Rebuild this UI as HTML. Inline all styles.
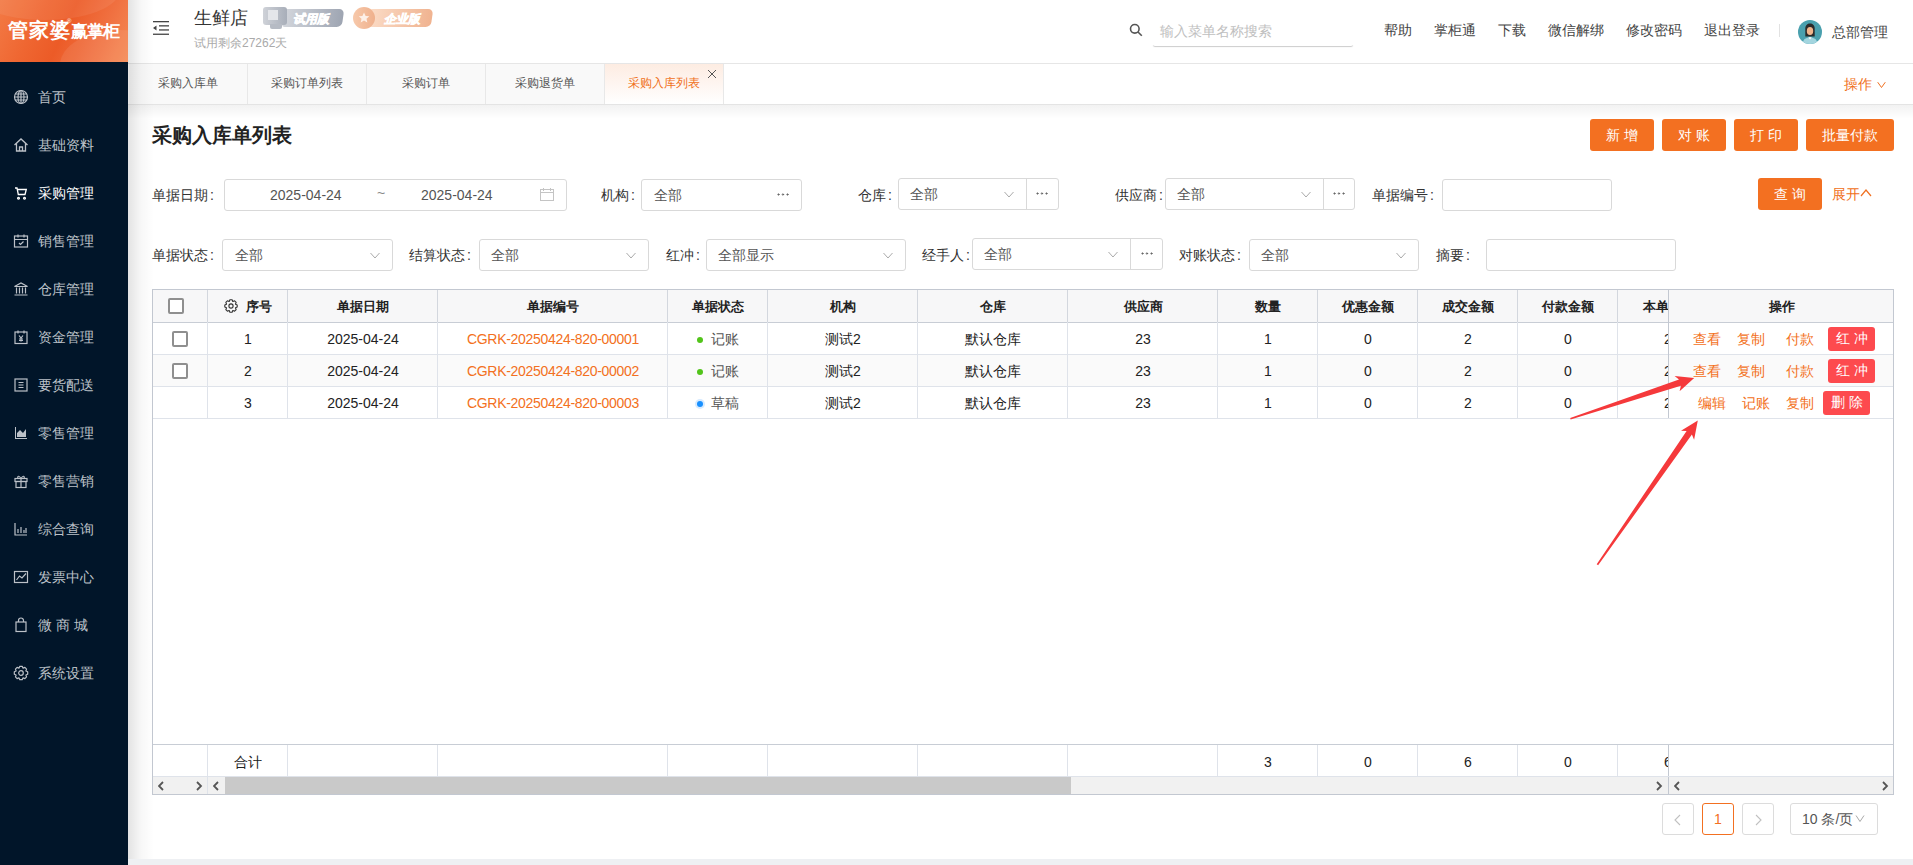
<!DOCTYPE html>
<html><head><meta charset="utf-8">
<style>
*{box-sizing:border-box;margin:0;padding:0}
html,body{width:1913px;height:865px;overflow:hidden;background:#fff;font-family:"Liberation Sans",sans-serif;color:#333}
.a{position:absolute}
#side{left:0;top:0;width:128px;height:865px;background:#011529}
#logo{left:0;top:0;width:128px;height:62px;background:linear-gradient(115deg,#f37a45 0%,#ef6631 30%,#ec5b27 50%,#f07040 75%,#f58a55 100%);overflow:hidden}
.mi{left:0;width:128px;height:20px;color:#bcc1c8;font-size:14px;line-height:20px;white-space:nowrap}
.mi span{position:absolute;left:38px;top:0}
.mi svg{position:absolute;left:13px;top:2px}
.mi.on{color:#fff}
#hdr{left:128px;top:0;width:1785px;height:64px;background:#fff;border-bottom:1px solid #e6e6e6}
#tabs{left:128px;top:64px;width:1785px;height:41px;background:#fff;border-bottom:1px solid #e4e4e4}
.tab{top:0;height:40px;width:119px;border-right:1px solid #e8e8e8;background:#f9f9f9;font-size:12px;color:#555;text-align:center;line-height:39px}
.tab.on{background:linear-gradient(180deg,#fdece2 0%,#fff 100%);color:#f07020}
#shadowL{left:128px;top:0;width:26px;height:865px;background:linear-gradient(90deg,rgba(0,0,0,.11),rgba(0,0,0,.03) 50%,rgba(0,0,0,0))}
#shadowT{left:128px;top:105px;width:1785px;height:14px;background:linear-gradient(180deg,rgba(0,0,0,.05),rgba(0,0,0,0))}
#bottom{left:128px;top:859px;width:1785px;height:6px;background:#eef0f3}
.hl{top:20px;font-size:14px;line-height:20px;color:#444;white-space:nowrap}
.btn{height:32px;background:#f37021;color:#fff;border-radius:3px;font-size:14px;text-align:center;line-height:32px;white-space:nowrap}
.lbl{font-size:14px;color:#333;line-height:20px;white-space:nowrap}
.box{height:32px;border:1px solid #d9d9d9;border-radius:3px;background:#fff}
.val{font-size:14px;color:#555;line-height:20px;white-space:nowrap}
.chev{width:10px;height:10px}
.dotsv{width:12px;height:3px;background:radial-gradient(circle at 1.5px 1.5px,#666 0.9px,transparent 1.2px) 0 0/4.5px 3px repeat-x}
.th{top:290px;height:32px;line-height:34px;padding-left:2px;font-size:13px;font-weight:bold;color:#222;text-align:center;white-space:nowrap}
.td{font-size:14px;line-height:20px;margin-top:1px;padding-left:2px;color:#222;white-space:nowrap}
.lk{color:#f37021;letter-spacing:-0.3px}
.lk2{font-size:14px;line-height:20px;margin-top:1px;color:#f37021;white-space:nowrap}
.rb{height:24px;line-height:23px;letter-spacing:4px;text-indent:4px;background:#fd4a4e;color:#fff;border-radius:3px;font-size:14px;text-align:center;white-space:nowrap}
.cb{width:16px;height:16px;border:2px solid #8f8f8f;border-radius:2px;background:#fff}
.pg{width:32px;height:32px;border:1px solid #dcdcdc;border-radius:3px;background:#fff}
.c{font-style:normal;margin-left:2px}
</style></head><body>
<div id="side" class="a">
  <div id="logo" class="a">
    <div class="a" style="left:-30px;top:-40px;width:150px;height:60px;border-radius:50%;background:rgba(255,255,255,.07)"></div>
    <div class="a" style="left:60px;top:30px;width:120px;height:70px;border-radius:50%;background:rgba(255,255,255,.08)"></div>
    <div class="a" style="left:8px;top:18px;color:#fff;font-weight:900;font-size:20px;line-height:24px;white-space:nowrap;letter-spacing:0.8px">管家婆</div>
    <div class="a" style="left:67px;top:17px;color:#fff;font-size:6px;line-height:8px">®</div>
    <div class="a" style="left:71px;top:21px;color:#fff;font-weight:900;font-size:16.5px;line-height:20px;white-space:nowrap;letter-spacing:-0.9px">赢掌柜</div>
  </div>
  <div class="a mi" style="top:87px"><svg width="16" height="16" viewBox="0 0 16 16" fill="none" stroke="#bcc1c8" stroke-width="1.2"><circle cx="8" cy="8" r="6.5"/><ellipse cx="8" cy="8" rx="3" ry="6.5"/><path d="M1.5 8h13M2.5 5h11M2.5 11h11M8 1.5v13"/></svg><span>首页</span></div>
  <div class="a mi" style="top:135px"><svg width="16" height="16" viewBox="0 0 16 16" fill="none" stroke="#bcc1c8" stroke-width="1.3"><path d="M1.5 8L8 2l6.5 6M3.5 6.5V14h9V6.5M6.5 14v-4h3v4"/></svg><span>基础资料</span></div>
  <div class="a mi on" style="top:183px"><svg width="16" height="16" viewBox="0 0 16 16" fill="none" stroke="#fff" stroke-width="1.3"><path d="M2 3h2l1.3 6.5h6.7l1.3-5H4.6M5.5 12.3a.9.9 0 1 0 .01 0M11.5 12.3a.9.9 0 1 0 .01 0"/></svg><span>采购管理</span></div>
  <div class="a mi" style="top:231px"><svg width="16" height="16" viewBox="0 0 16 16" fill="none" stroke="#bcc1c8" stroke-width="1.2"><rect x="1.5" y="3" width="13" height="11"/><path d="M1.5 6.5h13M5 1.5v3M11 1.5v3M6 10l1.5 1.5 3-3"/></svg><span>销售管理</span></div>
  <div class="a mi" style="top:279px"><svg width="16" height="16" viewBox="0 0 16 16" fill="none" stroke="#bcc1c8" stroke-width="1.2"><path d="M1.5 5.5L8 2l6.5 3.5zM3.5 6.5v6M6.5 6.5v6M9.5 6.5v6M12.5 6.5v6M1.5 14h13"/></svg><span>仓库管理</span></div>
  <div class="a mi" style="top:327px"><svg width="16" height="16" viewBox="0 0 16 16" fill="none" stroke="#bcc1c8" stroke-width="1.2"><rect x="2" y="3" width="12" height="11.5"/><path d="M5 1.5v3M11 1.5v3M6 6.5l2 2.5 2-2.5M8 9v3.5M6 10h4M6 11.5h4"/></svg><span>资金管理</span></div>
  <div class="a mi" style="top:375px"><svg width="16" height="16" viewBox="0 0 16 16" fill="none" stroke="#bcc1c8" stroke-width="1.2"><rect x="2" y="2" width="12" height="12"/><path d="M5.5 5.5h5M5.5 8h5M5.5 10.5h5"/></svg><span>要货配送</span></div>
  <div class="a mi" style="top:423px"><svg width="16" height="16" viewBox="0 0 16 16" fill="#bcc1c8"><path d="M2 2h1v11h11v1H2z"/><path d="M4 12V8l3-3 3 3 3-4v8z"/></svg><span>零售管理</span></div>
  <div class="a mi" style="top:471px"><svg width="16" height="16" viewBox="0 0 16 16" fill="none" stroke="#bcc1c8" stroke-width="1.2"><rect x="2" y="5.5" width="12" height="3"/><rect x="3" y="8.5" width="10" height="6"/><path d="M8 5.5v9M8 5.5C6 2 4 3 5 5.5M8 5.5c2-3.5 4-2.5 3 0"/></svg><span>零售营销</span></div>
  <div class="a mi" style="top:519px"><svg width="16" height="16" viewBox="0 0 16 16" fill="none" stroke="#bcc1c8" stroke-width="1.2"><path d="M2 2v12h12M5 8v4M8 6v6M11 9v3M13 7v5"/></svg><span>综合查询</span></div>
  <div class="a mi" style="top:567px"><svg width="16" height="16" viewBox="0 0 16 16" fill="none" stroke="#bcc1c8" stroke-width="1.2"><rect x="1.5" y="2.5" width="13" height="11"/><path d="M3.5 11l3-4 2.5 2 4-4.5"/></svg><span>发票中心</span></div>
  <div class="a mi" style="top:615px"><svg width="16" height="16" viewBox="0 0 16 16" fill="none" stroke="#bcc1c8" stroke-width="1.2"><rect x="3" y="5" width="10" height="9.5"/><path d="M5.5 5V3.5a2.5 2.5 0 0 1 5 0V5"/></svg><span>微 商 城</span></div>
  <div class="a mi" style="top:663px"><svg width="16" height="16" viewBox="0 0 16 16" fill="none" stroke="#bcc1c8" stroke-width="1.2" stroke-linejoin="round"><path d="M12.94 6.07 L14.69 6.80 L14.69 9.20 L12.94 9.93 L12.86 10.12 L13.58 11.89 L11.89 13.58 L10.12 12.86 L9.93 12.94 L9.20 14.69 L6.80 14.69 L6.07 12.94 L5.88 12.86 L4.11 13.58 L2.42 11.89 L3.14 10.12 L3.06 9.93 L1.31 9.20 L1.31 6.80 L3.06 6.07 L3.14 5.88 L2.42 4.11 L4.11 2.42 L5.88 3.14 L6.07 3.06 L6.80 1.31 L9.20 1.31 L9.93 3.06 L10.12 3.14 L11.89 2.42 L13.58 4.11 L12.86 5.88 Z"/><circle cx="8" cy="8" r="2.3"/></svg><span>系统设置</span></div>
</div>

<div id="hdr" class="a">
  <svg class="a" style="left:25px;top:21px" width="16" height="14" viewBox="0 0 16 14" fill="#444"><rect x="0" y="0" width="16" height="1.3"/><rect x="6" y="4.2" width="10" height="1.3"/><rect x="6" y="8.3" width="10" height="1.3"/><rect x="0" y="12.6" width="16" height="1.3"/><path d="M0 7l3.5-2.5v5z"/></svg>
  <div class="a" style="left:66px;top:6px;font-size:18px;line-height:24px;color:#333;white-space:nowrap">生鲜店</div>
  <div class="a" style="left:66px;top:35px;font-size:12px;line-height:16px;color:#aaa;white-space:nowrap">试用剩余27262天</div>
  <!-- trial badge -->
  <div class="a" style="left:155px;top:9px;width:60px;height:18px;border-radius:3px 5px 5px 3px;background:linear-gradient(90deg,#d3d6dc,#9ea5b2);transform:skewX(-8deg)"></div>
  <div class="a" style="left:135px;top:7px;width:24px;height:18px;border-radius:3px;background:linear-gradient(90deg,#cfd2d8,#a8aeb9)"></div>
  <div class="a" style="left:142px;top:24px;width:12px;height:5px;border-radius:0 0 2px 2px;background:#b6bbc4"></div>
  <div class="a" style="left:140px;top:10px;width:10px;height:10px;background:#e4e6ea"></div>
  <div class="a" style="left:165px;top:11px;font-size:12px;line-height:16px;color:#fff;font-weight:900;font-style:italic;-webkit-text-stroke:0.6px #fff;white-space:nowrap">试用版</div>
  <!-- enterprise badge -->
  <div class="a" style="left:240px;top:9px;width:64px;height:18px;border-radius:3px 5px 5px 3px;background:linear-gradient(90deg,#fbdcc7,#f0b390);transform:skewX(-8deg)"></div>
  <div class="a" style="left:225px;top:7px;width:22px;height:22px;border-radius:50%;background:linear-gradient(90deg,#f7c9ab,#efb08c)"></div>
  <svg class="a" style="left:230px;top:12px" width="12" height="12" viewBox="0 0 12 12"><path fill="#fdf0e8" d="M6 .5l1.6 3.4 3.7.4-2.8 2.5.8 3.7L6 8.6 2.7 10.5l.8-3.7L.7 4.3l3.7-.4z"/></svg>
  <div class="a" style="left:256px;top:11px;font-size:12px;line-height:16px;color:#fff;font-weight:900;font-style:italic;-webkit-text-stroke:0.6px #fff;white-space:nowrap">企业版</div>

  <svg class="a" style="left:1001px;top:23px" width="14" height="14" viewBox="0 0 14 14" fill="none" stroke="#555" stroke-width="1.6"><circle cx="5.8" cy="5.8" r="4.3"/><path d="M9 9l3.8 3.8"/></svg>
  <div class="a" style="left:1025px;top:44px;width:200px;height:2px;border-radius:0 0 3px 3px;box-shadow:0 1px 1px #ccc"></div>
  <div class="a" style="left:1032px;top:21px;font-size:14px;line-height:20px;color:#c0c0c0;white-space:nowrap">输入菜单名称搜索</div>
  <div class="a hl" style="left:1256px">帮助</div>
  <div class="a hl" style="left:1306px">掌柜通</div>
  <div class="a hl" style="left:1370px">下载</div>
  <div class="a hl" style="left:1420px">微信解绑</div>
  <div class="a hl" style="left:1498px">修改密码</div>
  <div class="a hl" style="left:1576px">退出登录</div>
  <div class="a" style="left:1651px;top:24px;width:1px;height:13px;background:#e2e2e2"></div>
  <svg class="a" style="left:1670px;top:20px" width="24" height="24" viewBox="0 0 24 24"><defs><clipPath id="avc"><circle cx="12" cy="12" r="12"/></clipPath></defs><circle cx="12" cy="12" r="12" fill="#4aa0ae"/><g clip-path="url(#avc)"><path d="M7.3 16.5V8.5C7.3 5.5 9.3 3.5 12 3.5s4.7 2 4.7 5v8z" fill="#2b2b2b"/><ellipse cx="12" cy="11" rx="3.2" ry="4" fill="#f1b58c"/><path d="M4.5 25c0-5 2.5-7.5 7.5-7.5s7.5 2.5 7.5 7.5z" fill="#a3d5df"/><path d="M10.3 17.3L12 19.5l1.7-2.2z" fill="#fff"/></g></svg>
  <div class="a hl" style="left:1704px;top:22px">总部管理</div>
</div>

<div id="tabs" class="a">
  <div class="a tab" style="left:1px">采购入库单</div>
  <div class="a tab" style="left:120px">采购订单列表</div>
  <div class="a tab" style="left:239px">采购订单</div>
  <div class="a tab" style="left:358px">采购退货单</div>
  <div class="a tab on" style="left:477px">采购入库列表
    <svg class="a" style="left:102px;top:5px" width="10" height="10" viewBox="0 0 10 10" stroke="#555" stroke-width="1"><path d="M1 1l8 8M9 1L1 9"/></svg>
  </div>
  <div class="a" style="left:1716px;top:11px;font-size:14px;line-height:18px;color:#f07020;white-space:nowrap">操作</div>
  <svg class="a" style="left:1749px;top:17px" width="9" height="8" viewBox="0 0 9 8" fill="none" stroke="#f07020" stroke-width="1"><path d="M0.7 1.2L4.5 6.5 8.3 1.2"/></svg>
</div>
<div id="shadowT" class="a"></div>

<!-- CONTENT -->
<div id="content">
<!--TABLE-->
<div class="a" style="left:152px;top:289px;width:1742px;height:506px;border:1px solid #c3c8d1;background:#fff"></div>
<div class="a" style="left:153px;top:290px;width:1740px;height:32px;background:#f7f7f8"></div>
<div class="a" style="left:153px;top:355px;width:1740px;height:31px;background:#fafafa"></div>
<div class="a" style="left:153px;top:322px;width:1740px;height:1px;background:#c8cdd5"></div>
<div class="a" style="left:153px;top:354px;width:1740px;height:1px;background:#dfe3ea"></div>
<div class="a" style="left:153px;top:386px;width:1740px;height:1px;background:#dfe3ea"></div>
<div class="a" style="left:153px;top:418px;width:1740px;height:1px;background:#dfe3ea"></div>
<div class="a" style="left:153px;top:744px;width:1740px;height:1px;background:#c8cdd5"></div>
<div class="a" style="left:153px;top:776px;width:1740px;height:1px;background:#dfe3ea"></div>
<div class="a" style="left:207px;top:290px;width:1px;height:128px;background:#dfe3ea"></div><div class="a" style="left:207px;top:290px;width:1px;height:32px;background:#d3d7de"></div>
<div class="a" style="left:207px;top:745px;width:1px;height:31px;background:#dfe3ea"></div>
<div class="a" style="left:287px;top:290px;width:1px;height:128px;background:#dfe3ea"></div><div class="a" style="left:287px;top:290px;width:1px;height:32px;background:#d3d7de"></div>
<div class="a" style="left:287px;top:745px;width:1px;height:31px;background:#dfe3ea"></div>
<div class="a" style="left:437px;top:290px;width:1px;height:128px;background:#dfe3ea"></div><div class="a" style="left:437px;top:290px;width:1px;height:32px;background:#d3d7de"></div>
<div class="a" style="left:437px;top:745px;width:1px;height:31px;background:#dfe3ea"></div>
<div class="a" style="left:667px;top:290px;width:1px;height:128px;background:#dfe3ea"></div><div class="a" style="left:667px;top:290px;width:1px;height:32px;background:#d3d7de"></div>
<div class="a" style="left:667px;top:745px;width:1px;height:31px;background:#dfe3ea"></div>
<div class="a" style="left:767px;top:290px;width:1px;height:128px;background:#dfe3ea"></div><div class="a" style="left:767px;top:290px;width:1px;height:32px;background:#d3d7de"></div>
<div class="a" style="left:767px;top:745px;width:1px;height:31px;background:#dfe3ea"></div>
<div class="a" style="left:917px;top:290px;width:1px;height:128px;background:#dfe3ea"></div><div class="a" style="left:917px;top:290px;width:1px;height:32px;background:#d3d7de"></div>
<div class="a" style="left:917px;top:745px;width:1px;height:31px;background:#dfe3ea"></div>
<div class="a" style="left:1067px;top:290px;width:1px;height:128px;background:#dfe3ea"></div><div class="a" style="left:1067px;top:290px;width:1px;height:32px;background:#d3d7de"></div>
<div class="a" style="left:1067px;top:745px;width:1px;height:31px;background:#dfe3ea"></div>
<div class="a" style="left:1217px;top:290px;width:1px;height:128px;background:#dfe3ea"></div><div class="a" style="left:1217px;top:290px;width:1px;height:32px;background:#d3d7de"></div>
<div class="a" style="left:1217px;top:745px;width:1px;height:31px;background:#dfe3ea"></div>
<div class="a" style="left:1317px;top:290px;width:1px;height:128px;background:#dfe3ea"></div><div class="a" style="left:1317px;top:290px;width:1px;height:32px;background:#d3d7de"></div>
<div class="a" style="left:1317px;top:745px;width:1px;height:31px;background:#dfe3ea"></div>
<div class="a" style="left:1417px;top:290px;width:1px;height:128px;background:#dfe3ea"></div><div class="a" style="left:1417px;top:290px;width:1px;height:32px;background:#d3d7de"></div>
<div class="a" style="left:1417px;top:745px;width:1px;height:31px;background:#dfe3ea"></div>
<div class="a" style="left:1517px;top:290px;width:1px;height:128px;background:#dfe3ea"></div><div class="a" style="left:1517px;top:290px;width:1px;height:32px;background:#d3d7de"></div>
<div class="a" style="left:1517px;top:745px;width:1px;height:31px;background:#dfe3ea"></div>
<div class="a" style="left:1617px;top:290px;width:1px;height:128px;background:#dfe3ea"></div><div class="a" style="left:1617px;top:290px;width:1px;height:32px;background:#d3d7de"></div>
<div class="a" style="left:1617px;top:745px;width:1px;height:31px;background:#dfe3ea"></div>
<div class="a th" style="left:207px;width:80px;padding-left:24px">序号</div>
<div class="a th" style="left:287px;width:150px">单据日期</div>
<div class="a th" style="left:437px;width:230px">单据编号</div>
<div class="a th" style="left:667px;width:100px">单据状态</div>
<div class="a th" style="left:767px;width:150px">机构</div>
<div class="a th" style="left:917px;width:150px">仓库</div>
<div class="a th" style="left:1067px;width:150px">供应商</div>
<div class="a th" style="left:1217px;width:100px">数量</div>
<div class="a th" style="left:1317px;width:100px">优惠金额</div>
<div class="a th" style="left:1417px;width:100px">成交金额</div>
<div class="a th" style="left:1517px;width:100px">付款金额</div>
<div class="a th" style="left:1617px;width:51px;overflow:hidden"><span class="a" style="left:26px;top:0">本单金额</span></div>
<svg class="a" style="left:224px;top:299px" width="14" height="14" viewBox="0 0 14 14" fill="none" stroke="#333" stroke-width="1.1" stroke-linejoin="round"><path d="M11.56 5.21 L13.20 5.89 L13.20 8.11 L11.56 8.79 L11.49 8.96 L12.17 10.60 L10.60 12.17 L8.96 11.49 L8.79 11.56 L8.11 13.20 L5.89 13.20 L5.21 11.56 L5.04 11.49 L3.40 12.17 L1.83 10.60 L2.51 8.96 L2.44 8.79 L0.80 8.11 L0.80 5.89 L2.44 5.21 L2.51 5.04 L1.83 3.40 L3.40 1.83 L5.04 2.51 L5.21 2.44 L5.89 0.80 L8.11 0.80 L8.79 2.44 L8.96 2.51 L10.60 1.83 L12.17 3.40 L11.49 5.04 Z"/><circle cx="7" cy="7" r="2.1"/></svg>
<div class="a cb" style="left:168px;top:298px"></div>
<div class="a cb" style="left:172px;top:331px"></div>
<div class="a cb" style="left:172px;top:363px"></div>
<div class="a td" style="left:207px;top:328px;width:80px;text-align:center">1</div>
<div class="a td" style="left:287px;top:328px;width:150px;text-align:center">2025-04-24</div>
<div class="a td lk" style="left:437px;top:328px;width:230px;text-align:center">CGRK-20250424-820-00001</div>
<div class="a" style="left:697px;top:337px;width:6px;height:6px;border-radius:50%;background:#52c41a"></div>
<div class="a td" style="left:709px;top:328px;color:#555">记账</div>
<div class="a td" style="left:767px;top:328px;width:150px;text-align:center">测试2</div>
<div class="a td" style="left:917px;top:328px;width:150px;text-align:center">默认仓库</div>
<div class="a td" style="left:1067px;top:328px;width:150px;text-align:center">23</div>
<div class="a td" style="left:1217px;top:328px;width:100px;text-align:center">1</div>
<div class="a td" style="left:1317px;top:328px;width:100px;text-align:center">0</div>
<div class="a td" style="left:1417px;top:328px;width:100px;text-align:center">2</div>
<div class="a td" style="left:1517px;top:328px;width:100px;text-align:center">0</div>
<div class="a td" style="left:1617px;top:328px;width:100px;text-align:center">2</div>
<div class="a td" style="left:207px;top:360px;width:80px;text-align:center">2</div>
<div class="a td" style="left:287px;top:360px;width:150px;text-align:center">2025-04-24</div>
<div class="a td lk" style="left:437px;top:360px;width:230px;text-align:center">CGRK-20250424-820-00002</div>
<div class="a" style="left:697px;top:369px;width:6px;height:6px;border-radius:50%;background:#52c41a"></div>
<div class="a td" style="left:709px;top:360px;color:#555">记账</div>
<div class="a td" style="left:767px;top:360px;width:150px;text-align:center">测试2</div>
<div class="a td" style="left:917px;top:360px;width:150px;text-align:center">默认仓库</div>
<div class="a td" style="left:1067px;top:360px;width:150px;text-align:center">23</div>
<div class="a td" style="left:1217px;top:360px;width:100px;text-align:center">1</div>
<div class="a td" style="left:1317px;top:360px;width:100px;text-align:center">0</div>
<div class="a td" style="left:1417px;top:360px;width:100px;text-align:center">2</div>
<div class="a td" style="left:1517px;top:360px;width:100px;text-align:center">0</div>
<div class="a td" style="left:1617px;top:360px;width:100px;text-align:center">2</div>
<div class="a td" style="left:207px;top:392px;width:80px;text-align:center">3</div>
<div class="a td" style="left:287px;top:392px;width:150px;text-align:center">2025-04-24</div>
<div class="a td lk" style="left:437px;top:392px;width:230px;text-align:center">CGRK-20250424-820-00003</div>
<div class="a" style="left:697px;top:401px;width:6px;height:6px;border-radius:50%;background:#1890ff;box-shadow:0 0 0 2px #d6eaff"></div>
<div class="a td" style="left:709px;top:392px;color:#555">草稿</div>
<div class="a td" style="left:767px;top:392px;width:150px;text-align:center">测试2</div>
<div class="a td" style="left:917px;top:392px;width:150px;text-align:center">默认仓库</div>
<div class="a td" style="left:1067px;top:392px;width:150px;text-align:center">23</div>
<div class="a td" style="left:1217px;top:392px;width:100px;text-align:center">1</div>
<div class="a td" style="left:1317px;top:392px;width:100px;text-align:center">0</div>
<div class="a td" style="left:1417px;top:392px;width:100px;text-align:center">2</div>
<div class="a td" style="left:1517px;top:392px;width:100px;text-align:center">0</div>
<div class="a td" style="left:1617px;top:392px;width:100px;text-align:center">2</div>
<div class="a" style="left:1668px;top:290px;width:225px;height:128px;background:#fff;border-left:1px solid #c3c8d1"></div>
<div class="a" style="left:1669px;top:290px;width:224px;height:33px;background:#f7f7f8;border-bottom:1px solid #c8cdd5"></div>
<div class="a" style="left:1669px;top:355px;width:224px;height:31px;background:#fafafa"></div>
<div class="a" style="left:1669px;top:354px;width:224px;height:1px;background:#dfe3ea"></div>
<div class="a" style="left:1669px;top:386px;width:224px;height:1px;background:#dfe3ea"></div>
<div class="a" style="left:1669px;top:418px;width:224px;height:1px;background:#dfe3ea"></div>
<div class="a th" style="left:1669px;width:224px">操作</div>
<div class="a lk2" style="left:1693px;top:328px">查看</div>
<div class="a lk2" style="left:1737px;top:328px">复制</div>
<div class="a lk2" style="left:1786px;top:328px">付款</div>
<div class="a rb" style="left:1828px;top:327px;width:47px">红冲</div>
<div class="a lk2" style="left:1693px;top:360px">查看</div>
<div class="a lk2" style="left:1737px;top:360px">复制</div>
<div class="a lk2" style="left:1786px;top:360px">付款</div>
<div class="a rb" style="left:1828px;top:359px;width:47px">红冲</div>
<div class="a lk2" style="left:1698px;top:392px">编辑</div>
<div class="a lk2" style="left:1742px;top:392px">记账</div>
<div class="a lk2" style="left:1786px;top:392px">复制</div>
<div class="a rb" style="left:1823px;top:391px;width:47px">删除</div>
<div class="a td" style="left:207px;top:751px;width:80px;text-align:center">合计</div>
<div class="a td" style="left:1217px;top:751px;width:100px;text-align:center">3</div>
<div class="a td" style="left:1317px;top:751px;width:100px;text-align:center">0</div>
<div class="a td" style="left:1417px;top:751px;width:100px;text-align:center">6</div>
<div class="a td" style="left:1517px;top:751px;width:100px;text-align:center">0</div>
<div class="a td" style="left:1617px;top:751px;width:100px;text-align:center">6</div>
<div class="a" style="left:1668px;top:745px;width:225px;height:31px;background:#fff;border-left:1px solid #c3c8d1"></div>
<div class="a" style="left:153px;top:777px;width:1740px;height:17px;background:#f1f1f1"></div>
<div class="a" style="left:207px;top:777px;width:1px;height:17px;background:#dfe3ea"></div>
<div class="a" style="left:1668px;top:777px;width:1px;height:17px;background:#c3c8d1"></div>
<div class="a" style="left:225px;top:777px;width:846px;height:17px;background:#c9c9c9"></div>
<svg class="a" style="left:158px;top:781px" width="7" height="10" viewBox="0 0 7 10" fill="none" stroke="#555" stroke-width="1.8"><path d="M5 1L1 5l4 4"/></svg>
<svg class="a" style="left:196px;top:781px" width="7" height="10" viewBox="0 0 7 10" fill="none" stroke="#555" stroke-width="1.8"><path d="M1 1l4 4-4 4"/></svg>
<svg class="a" style="left:213px;top:781px" width="7" height="10" viewBox="0 0 7 10" fill="none" stroke="#555" stroke-width="1.8"><path d="M5 1L1 5l4 4"/></svg>
<svg class="a" style="left:1656px;top:781px" width="7" height="10" viewBox="0 0 7 10" fill="none" stroke="#555" stroke-width="1.8"><path d="M1 1l4 4-4 4"/></svg>
<svg class="a" style="left:1674px;top:781px" width="7" height="10" viewBox="0 0 7 10" fill="none" stroke="#555" stroke-width="1.8"><path d="M5 1L1 5l4 4"/></svg>
<svg class="a" style="left:1882px;top:781px" width="7" height="10" viewBox="0 0 7 10" fill="none" stroke="#555" stroke-width="1.8"><path d="M1 1l4 4-4 4"/></svg>
<!--/TABLE-->

<div class="a" style="left:152px;top:122px;font-size:20px;line-height:26px;font-weight:bold;color:#222;white-space:nowrap">采购入库单列表</div>
<div class="a btn" style="left:1590px;top:119px;width:64px">新 增</div>
<div class="a btn" style="left:1662px;top:119px;width:64px">对 账</div>
<div class="a btn" style="left:1734px;top:119px;width:64px">打 印</div>
<div class="a btn" style="left:1806px;top:119px;width:88px">批量付款</div>

<!-- row1 -->
<div class="a lbl" style="left:152px;top:185px">单据日期<i class="c">:</i></div>
<div class="a box" style="left:224px;top:179px;width:343px"></div>
<div class="a val" style="left:270px;top:185px">2025-04-24</div>
<div class="a val" style="left:377px;top:183px;color:#888">~</div>
<div class="a val" style="left:421px;top:185px">2025-04-24</div>
<svg class="a" style="left:540px;top:188px" width="14" height="13" viewBox="0 0 14 13" fill="none" stroke="#c4c4c4" stroke-width="1"><rect x="0.5" y="1.5" width="13" height="11"/><path d="M0.5 4.5h13M3.5 0v3M10.5 0v3"/></svg>

<div class="a lbl" style="left:601px;top:185px">机构<i class="c">:</i></div>
<div class="a box" style="left:641px;top:179px;width:161px"></div>
<div class="a val" style="left:654px;top:185px">全部</div>
<div class="a dotsv" style="left:777px;top:193px"></div>

<div class="a lbl" style="left:858px;top:185px">仓库<i class="c">:</i></div>
<div class="a box" style="left:898px;top:178px;width:161px"></div>
<div class="a" style="left:1026px;top:179px;width:1px;height:30px;background:#d9d9d9"></div>
<div class="a val" style="left:910px;top:184px">全部</div>
<svg class="a chev" style="left:1004px;top:189px" viewBox="0 0 10 10" fill="none" stroke="#aaa" stroke-width="1"><path d="M0.5 3l4.5 5 4.5-5"/></svg>
<div class="a dotsv" style="left:1036px;top:192px"></div>

<div class="a lbl" style="left:1115px;top:185px">供应商<i class="c">:</i></div>
<div class="a box" style="left:1165px;top:178px;width:190px"></div>
<div class="a" style="left:1323px;top:179px;width:1px;height:30px;background:#d9d9d9"></div>
<div class="a val" style="left:1177px;top:184px">全部</div>
<svg class="a chev" style="left:1301px;top:189px" viewBox="0 0 10 10" fill="none" stroke="#aaa" stroke-width="1"><path d="M0.5 3l4.5 5 4.5-5"/></svg>
<div class="a dotsv" style="left:1333px;top:192px"></div>

<div class="a lbl" style="left:1372px;top:185px">单据编号<i class="c">:</i></div>
<div class="a box" style="left:1442px;top:179px;width:170px"></div>

<div class="a btn" style="left:1758px;top:178px;width:64px">查 询</div>
<div class="a" style="left:1832px;top:184px;font-size:14px;line-height:20px;color:#f07020;white-space:nowrap">展开</div>
<svg class="a" style="left:1860px;top:188px" width="12" height="10" viewBox="0 0 12 10" fill="none" stroke="#f07020" stroke-width="1.2"><path d="M1 8l5-6 5 6"/></svg>

<!-- row2 -->
<div class="a lbl" style="left:152px;top:245px">单据状态<i class="c">:</i></div>
<div class="a box" style="left:222px;top:239px;width:171px"></div>
<div class="a val" style="left:235px;top:245px">全部</div>
<svg class="a chev" style="left:370px;top:250px" viewBox="0 0 10 10" fill="none" stroke="#aaa" stroke-width="1"><path d="M0.5 3l4.5 5 4.5-5"/></svg>

<div class="a lbl" style="left:409px;top:245px">结算状态<i class="c">:</i></div>
<div class="a box" style="left:479px;top:239px;width:170px"></div>
<div class="a val" style="left:491px;top:245px">全部</div>
<svg class="a chev" style="left:626px;top:250px" viewBox="0 0 10 10" fill="none" stroke="#aaa" stroke-width="1"><path d="M0.5 3l4.5 5 4.5-5"/></svg>

<div class="a lbl" style="left:666px;top:245px">红冲<i class="c">:</i></div>
<div class="a box" style="left:706px;top:239px;width:200px"></div>
<div class="a val" style="left:718px;top:245px">全部显示</div>
<svg class="a chev" style="left:883px;top:250px" viewBox="0 0 10 10" fill="none" stroke="#aaa" stroke-width="1"><path d="M0.5 3l4.5 5 4.5-5"/></svg>

<div class="a lbl" style="left:922px;top:245px">经手人<i class="c">:</i></div>
<div class="a box" style="left:972px;top:238px;width:191px"></div>
<div class="a" style="left:1130px;top:239px;width:1px;height:30px;background:#d9d9d9"></div>
<div class="a val" style="left:984px;top:244px">全部</div>
<svg class="a chev" style="left:1108px;top:249px" viewBox="0 0 10 10" fill="none" stroke="#aaa" stroke-width="1"><path d="M0.5 3l4.5 5 4.5-5"/></svg>
<div class="a dotsv" style="left:1141px;top:252px"></div>

<div class="a lbl" style="left:1179px;top:245px">对账状态<i class="c">:</i></div>
<div class="a box" style="left:1249px;top:239px;width:170px"></div>
<div class="a val" style="left:1261px;top:245px">全部</div>
<svg class="a chev" style="left:1396px;top:250px" viewBox="0 0 10 10" fill="none" stroke="#aaa" stroke-width="1"><path d="M0.5 3l4.5 5 4.5-5"/></svg>

<div class="a lbl" style="left:1436px;top:245px">摘要<i class="c">:</i></div>
<div class="a box" style="left:1486px;top:239px;width:190px"></div>
</div>


<!-- pagination -->
<div class="a pg" style="left:1662px;top:803px"><svg class="a" style="left:11px;top:10px" width="8" height="12" viewBox="0 0 8 12" fill="none" stroke="#c0c0c0" stroke-width="1.1"><path d="M6 1L1 6l5 5"/></svg></div>
<div class="a pg" style="left:1702px;top:803px;border-color:#f37021;color:#f37021;text-align:center;line-height:30px;font-size:14px">1</div>
<div class="a pg" style="left:1742px;top:803px"><svg class="a" style="left:12px;top:10px" width="8" height="12" viewBox="0 0 8 12" fill="none" stroke="#c0c0c0" stroke-width="1.1"><path d="M1 1l5 5-5 5"/></svg></div>
<div class="a pg" style="left:1790px;top:803px;width:88px"><span class="a" style="left:11px;top:5px;font-size:14px;line-height:20px;color:#555;white-space:nowrap">10 条/页</span><svg class="a" style="left:64px;top:10px" width="10" height="9" viewBox="0 0 10 9" fill="none" stroke="#aaa" stroke-width="1"><path d="M1 1.5L5 7.5 9 1.5"/></svg></div>
<!-- arrows -->
<svg class="a" style="left:0;top:0" width="1913" height="865" viewBox="0 0 1913 865">
<path fill="#f5393b" d="M1570.2 417.9 L1679.0 379.6 L1674.6 376.0 L1694.2 378.0 L1679.6 391.2 L1680.9 385.7 L1570.6 419.5 Z"/>
<path fill="#f5393b" d="M1596.7 564.3 L1686.6 431.0 L1681.0 430.7 L1697.8 420.5 L1694.1 439.8 L1691.9 434.6 L1598.1 565.3 Z"/>
</svg>
<div id="shadowL" class="a"></div>
<div id="bottom" class="a"></div>
</body></html>
